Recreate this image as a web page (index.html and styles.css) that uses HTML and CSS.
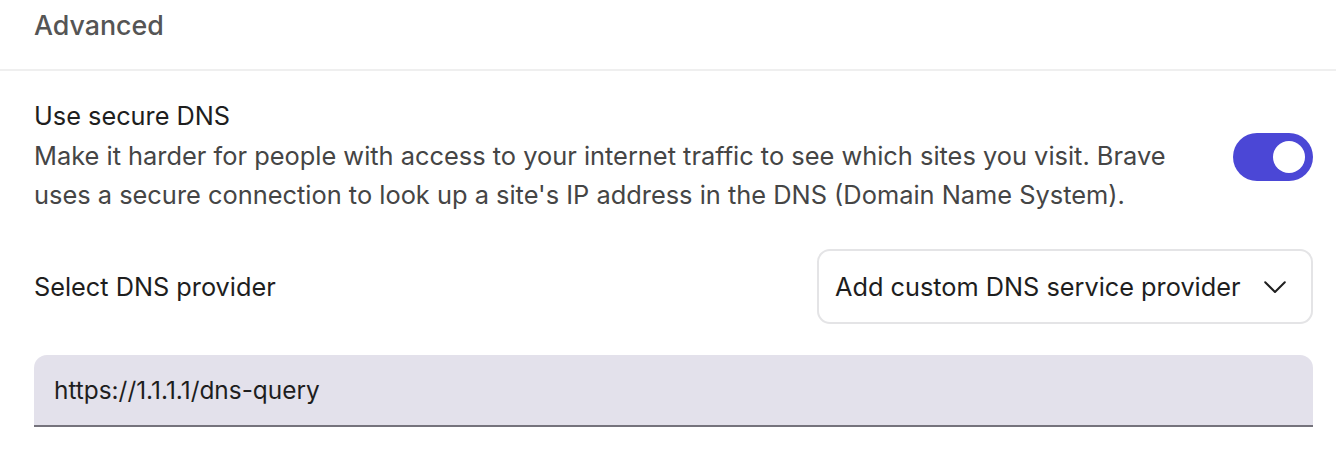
FILE: index.html
```html
<!DOCTYPE html>
<html>
<head>
<meta charset="utf-8">
<link rel="stylesheet" href="styles.css">
</head>
<body>
<div class="page">
  <div class="header">
    <h1 class="title">Advanced</h1>
  </div>
  <div class="section">
    <div class="row toggle-row">
      <div class="text">
        <div class="label">Use secure DNS</div>
        <div class="desc">Make it harder for people with access to your internet traffic to see which sites you visit. Brave uses a secure connection to look up a site's IP address in the DNS (Domain Name System).</div>
      </div>
      <div class="toggle"><span class="knob"></span></div>
    </div>
    <div class="row select-row">
      <div class="label">Select DNS provider</div>
      <div class="select">
        <span>Add custom DNS service provider</span>
        <svg class="chev" width="22" height="13" viewBox="0 0 22 13"><path d="M1.2 1.2 L11 11 L20.8 1.2" fill="none" stroke="#1f1f1f" stroke-width="2" stroke-linecap="round" stroke-linejoin="round"/></svg>
      </div>
    </div>
    <div class="input">https://1.1.1.1/dns-query</div>
  </div>
</div>
</body>
</html>
```
FILE: styles.css
```css
html, body {
  margin: 0;
  padding: 0;
  background: #ffffff;
}
body {
  font-family: Inter, "Noto Sans", sans-serif;
  color: #1f1f1f;
  width: 1336px;
  height: 456px;
  overflow: hidden;
}
.header {
  height: 71px;
  border-bottom: 2px solid #efefef;
  box-sizing: border-box;
  padding: 6px 34px 0;
}
.title {
  margin: 0;
  font-size: 26.8px;
  font-weight: 500;
  color: #555555;
  line-height: 38px;
}
.section {
  padding: 25px 23px 0 34px;
}
.row {
  display: flex;
  align-items: center;
  justify-content: space-between;
}
.label {
  font-size: 25.3px;
  line-height: 40px;
  color: #1e1e1e;
}
.desc {
  font-size: 25.4px;
  line-height: 39px;
  color: #454545;
  width: 1165px;
}
.toggle {
  width: 80px;
  height: 48px;
  border-radius: 24px;
  background: #4b47d6;
  display: flex;
  align-items: center;
  justify-content: flex-end;
  padding-right: 8px;
  box-sizing: border-box;
  flex: none;
  margin-top: 4px;
}
.knob {
  width: 32px;
  height: 32px;
  border-radius: 50%;
  background: #ffffff;
}
.select-row {
  margin-top: 35px;
}
.select {
  width: 496px;
  height: 75px;
  box-sizing: border-box;
  border: 2px solid #e4e4e6;
  border-radius: 13px;
  display: flex;
  align-items: center;
  justify-content: space-between;
  padding: 0 25px 0 16px;
  font-size: 25.3px;
  color: #1e1e1e;
}
.chev { display: block; margin-top: 2px; }
.input {
  margin-top: 31px;
  height: 72px;
  box-sizing: border-box;
  background: #e3e1eb;
  border-bottom: 2px solid #75737c;
  border-radius: 13px 13px 0 0;
  padding: 0 20px;
  display: flex;
  align-items: center;
  font-size: 24.4px;
  color: #1e1e1e;
}
```
